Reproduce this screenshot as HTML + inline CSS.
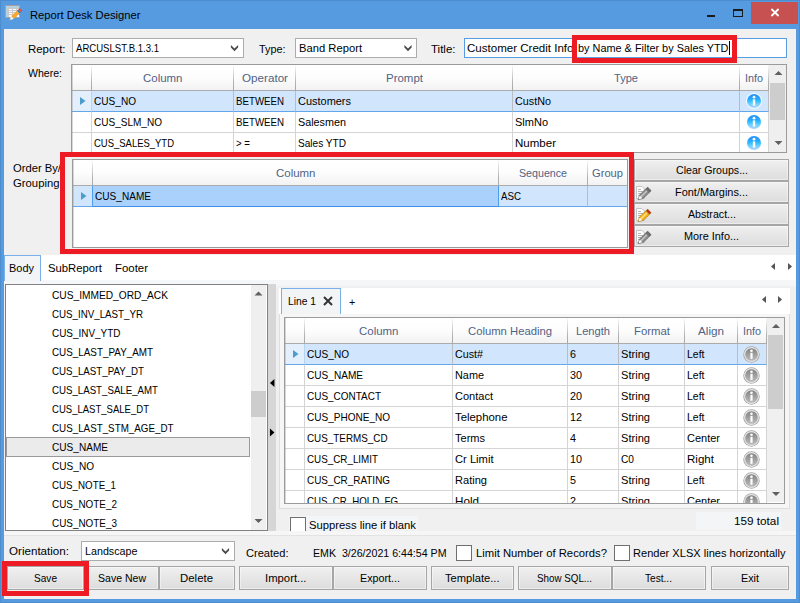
<!DOCTYPE html>
<html><head><meta charset="utf-8"><title>Report Desk Designer</title><style>
html,body{margin:0;padding:0;}
body{width:800px;height:603px;position:relative;overflow:hidden;background:#569be0;font-family:"Liberation Sans",sans-serif;font-size:12px;color:#000;}
div{position:absolute;box-sizing:border-box;}
.t{white-space:nowrap;line-height:14px;height:14px;font-size:11.5px;}
.s{display:inline-block;transform-origin:0 50%;white-space:pre;}
.hd{background:linear-gradient(#ffffff,#fdfdfd 50%,#f2f2f2);border-bottom:1px solid #ababab;color:#4f6384;white-space:nowrap;overflow:hidden;}
.c{border-right:1px solid #d4d4d4;border-bottom:1px solid #d4d4d4;background:#fff;white-space:nowrap;overflow:hidden;}
.sel{background:#d1e6fd;border-bottom:1px solid #63a7ea;border-right-color:#b9bcc0;}
.ind2{border-right-color:#4f9ded;}
.ind{background:#e3effc;border-right-color:#b5d3f3;}
.foc{background:#a9d1fb;border-bottom:1px solid #3e8fe6;border-right-color:#4f9ded;}
.btn{background:linear-gradient(#f0f0f0,#e6e6e6 50%,#dddddd);border:1px solid #a6a6a6;white-space:nowrap;box-shadow:inset 0 0 0 1px rgba(255,255,255,.45);}
.cb{background:#fff;border:1px solid #6f6f6f;}
.combo{background:#fff;border:1px solid #acacac;}
.red{border:5px solid #ed1c24;}
svg{position:absolute;overflow:visible;}
</style></head><body>
<div class="" style="left:0px;top:0px;width:800px;height:603px;border:1px solid #4d8ccd;border-bottom-color:#4d8ccd;"></div>
<div class="t" style="left:29.5px;top:8px;"><span class="s" style="transform:scaleX(0.9767);">Report Desk Designer</span></div>
<div class="" style="left:751px;top:2px;width:47px;height:22px;background:#c75050;"></div>
<svg style="left:0;top:0" width="1" height="1"><path d="M771.4,9 L778.6,16 M778.6,9 L771.4,16" stroke="#fff" stroke-width="1.8" fill="none"/></svg>
<div class="" style="left:707px;top:15px;width:8px;height:2px;background:#1a1a1a;"></div>
<div class="" style="left:733px;top:9px;width:10px;height:8px;border:1px solid #1a1a1a;border-top:2px solid #1a1a1a;"></div>
<svg style="left:0;top:0" width="30" height="28" viewBox="0 0 30 28">
<rect x="5.5" y="5.5" width="14" height="12" fill="#ffffff" stroke="#a2a2a2" stroke-width="1"/>
<rect x="6" y="6" width="13" height="2" fill="#a6d6ee"/>
<rect x="6" y="6" width="2" height="11" fill="#a6d6ee"/>
<path d="M6,8.5h13M6,10.5h13M6,12.5h13M6,14.5h13M8.5,6v11M12.5,6v11M16.5,6v11" stroke="#c9c9c9" stroke-width="1" fill="none"/>
<polygon points="9.40,20.40 11.21,16.06 13.83,18.82" fill="#f6f6f6"/>
<polygon points="9.40,20.40 10.03,18.89 10.94,19.85" fill="#8a8a8a"/>
<polygon points="11.21,16.06 16.95,10.63 19.56,13.38 13.83,18.82" fill="#f9a92e"/>
<polygon points="16.95,10.63 18.11,9.53 20.72,12.28 19.56,13.38" fill="#2f7fc2"/>
<polygon points="18.11,9.53 19.69,8.02 22.31,10.78 20.72,12.28" fill="#e2503c"/>
</svg>
<div class="" style="left:4px;top:29px;width:792px;height:570px;background:#f0f0f0;"></div>
<div class="t" style="left:28.0px;top:42px;"><span class="s" style="transform:scaleX(0.9942);">Report:</span></div>
<div class="combo" style="left:72px;top:38px;width:172px;height:20px;"></div>
<div class="t" style="left:76.0px;top:41px;"><span class="s" style="transform:scaleX(0.8323);">ARCUSLST.B.1.3.1</span></div>
<svg style="left:0;top:0" width="1" height="1"><polygon points="230.9,45 234.5,48.6 238.1,45 238.1,47.6 234.5,51.2 230.9,47.6" fill="#4a4a4a"/></svg>
<div class="t" style="left:259.0px;top:42px;"><span class="s" style="transform:scaleX(0.9417);">Type:</span></div>
<div class="combo" style="left:295px;top:38px;width:122px;height:20px;"></div>
<div class="t" style="left:299.0px;top:41px;"><span class="s" style="transform:scaleX(0.9756);">Band Report</span></div>
<svg style="left:0;top:0" width="1" height="1"><polygon points="404.4,45 408.0,48.6 411.6,45 411.6,47.6 408.0,51.2 404.4,47.6" fill="#4a4a4a"/></svg>
<div class="t" style="left:431.0px;top:42px;"><span class="s" style="transform:scaleX(1.0000);">Title:</span></div>
<div class="combo" style="left:464px;top:38px;width:323px;height:20px;border-color:#569de5;"></div>
<div class="t" style="left:467.4px;top:41px;"><span class="s" style="transform:scaleX(1.0037);">Customer Credit Info</span></div>
<div class="t" style="left:578.0px;top:41px;"><span class="s" style="transform:scaleX(0.9469);">by Name &amp; Filter by Sales YTD</span></div>
<div class="" style="left:729px;top:41px;width:1px;height:14px;background:#000;"></div>
<div class="t" style="left:28.0px;top:66px;"><span class="s" style="transform:scaleX(0.9170);">Where:</span></div>
<div style="left:71px;top:64px;width:716px;height:89px;background:#fff;border:1px solid #9b9b9b;overflow:hidden;">
</div>
<div class="hd" style="left:72px;top:65px;width:20px;height:26px;"></div>
<div class="" style="left:91px;top:65px;width:1px;height:25px;background:linear-gradient(#fbfbfb,#e0e0e0 25%,#b2b2b2 70%,#a8a8a8);"></div>
<div class="hd" style="left:92px;top:65px;width:142px;height:26px;"></div>
<div class="" style="left:233px;top:65px;width:1px;height:25px;background:linear-gradient(#fbfbfb,#e0e0e0 25%,#b2b2b2 70%,#a8a8a8);"></div>
<div class="t" style="left:142.8px;top:71px;color:#4f6384;"><span class="s" style="transform:scaleX(0.9965);">Column</span></div>
<div class="hd" style="left:234px;top:65px;width:62px;height:26px;"></div>
<div class="" style="left:295px;top:65px;width:1px;height:25px;background:linear-gradient(#fbfbfb,#e0e0e0 25%,#b2b2b2 70%,#a8a8a8);"></div>
<div class="t" style="left:241.5px;top:71px;color:#4f6384;"><span class="s" style="transform:scaleX(1.0134);">Operator</span></div>
<div class="hd" style="left:296px;top:65px;width:217px;height:26px;"></div>
<div class="" style="left:512px;top:65px;width:1px;height:25px;background:linear-gradient(#fbfbfb,#e0e0e0 25%,#b2b2b2 70%,#a8a8a8);"></div>
<div class="t" style="left:385.5px;top:71px;color:#4f6384;"><span class="s" style="transform:scaleX(0.9979);">Prompt</span></div>
<div class="hd" style="left:513px;top:65px;width:227px;height:26px;"></div>
<div class="" style="left:739px;top:65px;width:1px;height:25px;background:linear-gradient(#fbfbfb,#e0e0e0 25%,#b2b2b2 70%,#a8a8a8);"></div>
<div class="t" style="left:614.0px;top:71px;color:#4f6384;"><span class="s" style="transform:scaleX(0.9624);">Type</span></div>
<div class="hd" style="left:740px;top:65px;width:29px;height:26px;"></div>
<div class="" style="left:768px;top:65px;width:1px;height:25px;background:linear-gradient(#fbfbfb,#e0e0e0 25%,#b2b2b2 70%,#a8a8a8);"></div>
<div class="t" style="left:745.0px;top:71px;color:#4f6384;"><span class="s" style="transform:scaleX(0.9381);">Info</span></div>
<div class="c sel ind" style="left:72px;top:91px;width:20px;height:21px;"></div>
<div class="c sel" style="left:92px;top:91px;width:142px;height:21px;"></div>
<div class="c sel" style="left:234px;top:91px;width:62px;height:21px;"></div>
<div class="c sel" style="left:296px;top:91px;width:217px;height:21px;"></div>
<div class="c sel" style="left:513px;top:91px;width:227px;height:21px;"></div>
<div class="c sel" style="left:740px;top:91px;width:29px;height:21px;"></div>
<div style="left:72px;top:91px;width:714px;height:21px;overflow:hidden;">
<svg style="left:8px;top:6px" width="6" height="8"><polygon points="0,0 0,8 5.5,4" fill="#4c9ccc"/></svg>
<div class="t" style="left:22px;top:3px;"><span class="s" style="transform:scaleX(0.8761);">CUS_NO</span></div>
<div class="t" style="left:164px;top:3px;"><span class="s" style="transform:scaleX(0.8440);">BETWEEN</span></div>
<div class="t" style="left:226px;top:3px;"><span class="s" style="transform:scaleX(0.9531);">Customers</span></div>
<div class="t" style="left:443px;top:3px;"><span class="s" style="transform:scaleX(0.9385);">CustNo</span></div>
<div style="left:668px;top:0;width:1px;height:1px;"><svg style="left:6px;top:2px" width="16" height="16" viewBox="0 0 16 16"><defs><linearGradient id="gb" x1="0" y1="0" x2="0" y2="1"><stop offset="0" stop-color="#2392ff"/><stop offset="0.35" stop-color="#2aa6ff"/><stop offset="0.5" stop-color="#30c2ff"/><stop offset="0.72" stop-color="#74d0ff"/><stop offset="1" stop-color="#b0d4ff"/></linearGradient></defs><circle cx="8" cy="8" r="8" fill="#fff" fill-opacity="0.85"/><circle cx="8" cy="8" r="7" fill="url(#gb)"/><circle cx="8" cy="4.2" r="1.4" fill="#fff"/><rect x="6.8" y="6.4" width="2.4" height="6.2" fill="#fff"/></svg></div>
</div>
<div class="c" style="left:72px;top:112px;width:20px;height:21px;"></div>
<div class="c" style="left:92px;top:112px;width:142px;height:21px;"></div>
<div class="c" style="left:234px;top:112px;width:62px;height:21px;"></div>
<div class="c" style="left:296px;top:112px;width:217px;height:21px;"></div>
<div class="c" style="left:513px;top:112px;width:227px;height:21px;"></div>
<div class="c" style="left:740px;top:112px;width:29px;height:21px;"></div>
<div style="left:72px;top:112px;width:714px;height:21px;overflow:hidden;">
<div class="t" style="left:22px;top:3px;"><span class="s" style="transform:scaleX(0.8721);">CUS_SLM_NO</span></div>
<div class="t" style="left:164px;top:3px;"><span class="s" style="transform:scaleX(0.8440);">BETWEEN</span></div>
<div class="t" style="left:226px;top:3px;"><span class="s" style="transform:scaleX(0.9386);">Salesmen</span></div>
<div class="t" style="left:443px;top:3px;"><span class="s" style="transform:scaleX(0.9561);">SlmNo</span></div>
<div style="left:668px;top:0;width:1px;height:1px;"><svg style="left:6px;top:2px" width="16" height="16" viewBox="0 0 16 16"><defs><linearGradient id="gb" x1="0" y1="0" x2="0" y2="1"><stop offset="0" stop-color="#2392ff"/><stop offset="0.35" stop-color="#2aa6ff"/><stop offset="0.5" stop-color="#30c2ff"/><stop offset="0.72" stop-color="#74d0ff"/><stop offset="1" stop-color="#b0d4ff"/></linearGradient></defs><circle cx="8" cy="8" r="8" fill="#fff" fill-opacity="0.85"/><circle cx="8" cy="8" r="7" fill="url(#gb)"/><circle cx="8" cy="4.2" r="1.4" fill="#fff"/><rect x="6.8" y="6.4" width="2.4" height="6.2" fill="#fff"/></svg></div>
</div>
<div class="c" style="left:72px;top:133px;width:20px;height:19px;border-bottom:none;"></div>
<div class="c" style="left:92px;top:133px;width:142px;height:19px;border-bottom:none;"></div>
<div class="c" style="left:234px;top:133px;width:62px;height:19px;border-bottom:none;"></div>
<div class="c" style="left:296px;top:133px;width:217px;height:19px;border-bottom:none;"></div>
<div class="c" style="left:513px;top:133px;width:227px;height:19px;border-bottom:none;"></div>
<div class="c" style="left:740px;top:133px;width:29px;height:19px;border-bottom:none;"></div>
<div style="left:72px;top:133px;width:714px;height:19px;overflow:hidden;">
<div class="t" style="left:22px;top:3px;"><span class="s" style="transform:scaleX(0.8234);">CUS_SALES_YTD</span></div>
<div class="t" style="left:164px;top:3px;"><span class="s" style="transform:scaleX(0.8413);">&gt; =</span></div>
<div class="t" style="left:226px;top:3px;"><span class="s" style="transform:scaleX(0.8765);">Sales YTD</span></div>
<div class="t" style="left:443px;top:3px;"><span class="s" style="transform:scaleX(1.0023);">Number</span></div>
<div style="left:668px;top:0;width:1px;height:1px;"><svg style="left:6px;top:2px" width="16" height="16" viewBox="0 0 16 16"><defs><linearGradient id="gb" x1="0" y1="0" x2="0" y2="1"><stop offset="0" stop-color="#2392ff"/><stop offset="0.35" stop-color="#2aa6ff"/><stop offset="0.5" stop-color="#30c2ff"/><stop offset="0.72" stop-color="#74d0ff"/><stop offset="1" stop-color="#b0d4ff"/></linearGradient></defs><circle cx="8" cy="8" r="8" fill="#fff" fill-opacity="0.85"/><circle cx="8" cy="8" r="7" fill="url(#gb)"/><circle cx="8" cy="4.2" r="1.4" fill="#fff"/><rect x="6.8" y="6.4" width="2.4" height="6.2" fill="#fff"/></svg></div>
</div>
<div class="" style="left:769px;top:65px;width:17px;height:87px;background:#efefef;"></div>
<div class="" style="left:770px;top:83px;width:15px;height:37px;background:#cdcdcd;"></div>
<svg style="left:0;top:0" width="1" height="1"><polygon points="774.5,75.0 782.5,75.0 778.5,71.0" fill="#606060"/></svg>
<svg style="left:0;top:0" width="1" height="1"><polygon points="774.5,141.0 782.5,141.0 778.5,145.0" fill="#606060"/></svg>
<div class="t" style="left:13.0px;top:161px;"><span class="s" style="transform:scaleX(0.9752);">Order By/</span></div>
<div class="t" style="left:13.0px;top:176px;"><span class="s" style="transform:scaleX(0.9828);">Grouping</span></div>
<div style="left:72px;top:159px;width:556px;height:89px;background:#fff;border:1px solid #9b9b9b;overflow:hidden;">
</div>
<div class="hd" style="left:73px;top:160px;width:20px;height:26px;"></div>
<div class="" style="left:92px;top:160px;width:1px;height:25px;background:linear-gradient(#fbfbfb,#e0e0e0 25%,#b2b2b2 70%,#a8a8a8);"></div>
<div class="hd" style="left:93px;top:160px;width:406px;height:26px;"></div>
<div class="" style="left:498px;top:160px;width:1px;height:25px;background:linear-gradient(#fbfbfb,#e0e0e0 25%,#b2b2b2 70%,#a8a8a8);"></div>
<div class="t" style="left:275.8px;top:166px;color:#4f6384;"><span class="s" style="transform:scaleX(0.9965);">Column</span></div>
<div class="hd" style="left:499px;top:160px;width:89px;height:26px;"></div>
<div class="" style="left:587px;top:160px;width:1px;height:25px;background:linear-gradient(#fbfbfb,#e0e0e0 25%,#b2b2b2 70%,#a8a8a8);"></div>
<div class="t" style="left:519.0px;top:166px;color:#4f6384;"><span class="s" style="transform:scaleX(0.9267);">Sequence</span></div>
<div class="hd" style="left:588px;top:160px;width:39px;height:26px;"></div>
<div class="t" style="left:591.5px;top:166px;color:#4f6384;"><span class="s" style="transform:scaleX(0.9697);">Group</span></div>
<div class="c sel ind2" style="left:73px;top:186px;width:20px;height:21px;"></div>
<div class="c sel foc" style="left:93px;top:186px;width:406px;height:21px;"></div>
<div class="c sel" style="left:499px;top:186px;width:89px;height:21px;"></div>
<div class="c sel" style="left:588px;top:186px;width:39px;height:21px;border-right:none;"></div>
<div style="left:73px;top:186px;width:554px;height:21px;overflow:hidden;">
<svg style="left:8px;top:6px" width="6" height="8"><polygon points="0,0 0,8 5.5,4" fill="#4c9ccc"/></svg>
<div class="t" style="left:22px;top:3px;"><span class="s" style="transform:scaleX(0.8763);">CUS_NAME</span></div>
<div class="t" style="left:428px;top:3px;"><span class="s" style="transform:scaleX(0.8454);">ASC</span></div>
</div>
<div class="btn" style="left:634px;top:159px;width:155px;height:22px;"></div>
<div class="t" style="left:675.5px;top:163px;"><span class="s" style="transform:scaleX(0.9233);">Clear Groups...</span></div>
<div class="btn" style="left:634px;top:181px;width:155px;height:22px;"></div>
<div class="t" style="left:675.0px;top:185px;"><span class="s" style="transform:scaleX(0.9517);">Font/Margins...</span></div>
<svg style="left:0;top:0" width="1" height="1"><path d="M636.5,186.5 h5.5 l2.5,2.5 v9.5 h-8 z" fill="#fdfdfd" stroke="#c4c4c4" stroke-width="1"/><path d="M638,189.5h3 M638,191.5h5 M638,193.5h5 M638,195.5h4" stroke="#b4b4b4" stroke-width="1" fill="none"/><polygon points="637.78,200.01 639.12,194.88 647.67,186.77 651.53,190.83 642.97,198.94" fill="#6a6a6a"/><polygon points="638.58,199.25 639.82,195.32 642.57,198.22" fill="#ffffff"/><polygon points="639.61,195.10 645.70,189.33 648.86,192.67 642.78,198.44" fill="#8c8c8c"/><polygon points="640.50,196.05 646.59,190.28 647.62,191.36 641.54,197.14" fill="#c4c4c4"/><polygon points="645.70,189.33 646.28,188.78 649.44,192.12 648.86,192.67" fill="#7a7a7a"/><polygon points="646.28,188.78 647.65,187.48 650.82,190.81 649.44,192.12" fill="#6e6e6e"/></svg>
<div class="btn" style="left:634px;top:203px;width:155px;height:22px;"></div>
<div class="t" style="left:687.5px;top:207px;"><span class="s" style="transform:scaleX(0.9270);">Abstract...</span></div>
<svg style="left:0;top:0" width="1" height="1"><path d="M636.5,208.5 h5.5 l2.5,2.5 v9.5 h-8 z" fill="#fdfdfd" stroke="#c4c4c4" stroke-width="1"/><path d="M638,211.5h3 M638,213.5h5 M638,215.5h5 M638,217.5h4" stroke="#b4b4b4" stroke-width="1" fill="none"/><polygon points="637.78,222.01 639.12,216.88 647.67,208.77 651.53,212.83 642.97,220.94" fill="#b07a10"/><polygon points="638.58,221.25 639.82,217.32 642.57,220.22" fill="#ffffff"/><polygon points="639.61,217.10 645.70,211.33 648.86,214.67 642.78,220.44" fill="#f4b21e"/><polygon points="640.50,218.05 646.59,212.28 647.62,213.36 641.54,219.14" fill="#ffe27a"/><polygon points="645.70,211.33 646.28,210.78 649.44,214.12 648.86,214.67" fill="#d9a020"/><polygon points="646.28,210.78 647.65,209.48 650.82,212.81 649.44,214.12" fill="#c8202a"/></svg>
<div class="btn" style="left:634px;top:225px;width:155px;height:22px;"></div>
<div class="t" style="left:684.0px;top:229px;"><span class="s" style="transform:scaleX(0.9455);">More Info...</span></div>
<svg style="left:0;top:0" width="1" height="1"><path d="M636.5,230.5 h5.5 l2.5,2.5 v9.5 h-8 z" fill="#fdfdfd" stroke="#c4c4c4" stroke-width="1"/><path d="M638,233.5h3 M638,235.5h5 M638,237.5h5 M638,239.5h4" stroke="#b4b4b4" stroke-width="1" fill="none"/><polygon points="637.78,244.01 639.12,238.88 647.67,230.77 651.53,234.83 642.97,242.94" fill="#6a6a6a"/><polygon points="638.58,243.25 639.82,239.32 642.57,242.22" fill="#ffffff"/><polygon points="639.61,239.10 645.70,233.33 648.86,236.67 642.78,242.44" fill="#8c8c8c"/><polygon points="640.50,240.05 646.59,234.28 647.62,235.36 641.54,241.14" fill="#c4c4c4"/><polygon points="645.70,233.33 646.28,232.78 649.44,236.12 648.86,236.67" fill="#7a7a7a"/><polygon points="646.28,232.78 647.65,231.48 650.82,234.81 649.44,236.12" fill="#6e6e6e"/></svg>
<div class="" style="left:4px;top:255px;width:792px;height:25px;background:#fff;"></div>
<div class="" style="left:4px;top:280px;width:792px;height:6px;background:#f5f6f7;"></div>
<div class="" style="left:4px;top:255px;width:37px;height:26px;background:#f3f4f6;border:1px solid #7ab0ea;border-bottom:none;"></div>
<div class="t" style="left:9.0px;top:261px;"><span class="s" style="transform:scaleX(0.9535);">Body</span></div>
<div class="t" style="left:48.0px;top:261px;"><span class="s" style="transform:scaleX(0.9821);">SubReport</span></div>
<div class="t" style="left:115.0px;top:261px;"><span class="s" style="transform:scaleX(0.9925);">Footer</span></div>
<svg style="left:0;top:0" width="1" height="1"><polygon points="775.0,263.0 775.0,270.0 771.0,266.5" fill="#555"/></svg>
<svg style="left:0;top:0" width="1" height="1"><polygon points="788.0,263.0 788.0,270.0 792.0,266.5" fill="#555"/></svg>
<div class="" style="left:5px;top:284px;width:263px;height:247px;background:#fff;border:1px solid #7f8185;"></div>
<div class="t" style="left:52.0px;top:288px;"><span class="s" style="transform:scaleX(0.8855);">CUS_IMMED_ORD_ACK</span></div>
<div class="t" style="left:52.0px;top:307px;"><span class="s" style="transform:scaleX(0.8475);">CUS_INV_LAST_YR</span></div>
<div class="t" style="left:52.0px;top:326px;"><span class="s" style="transform:scaleX(0.8644);">CUS_INV_YTD</span></div>
<div class="t" style="left:52.0px;top:345px;"><span class="s" style="transform:scaleX(0.8573);">CUS_LAST_PAY_AMT</span></div>
<div class="t" style="left:52.0px;top:364px;"><span class="s" style="transform:scaleX(0.8450);">CUS_LAST_PAY_DT</span></div>
<div class="t" style="left:52.0px;top:383px;"><span class="s" style="transform:scaleX(0.8418);">CUS_LAST_SALE_AMT</span></div>
<div class="t" style="left:52.0px;top:402px;"><span class="s" style="transform:scaleX(0.8293);">CUS_LAST_SALE_DT</span></div>
<div class="t" style="left:52.0px;top:421px;"><span class="s" style="transform:scaleX(0.8525);">CUS_LAST_STM_AGE_DT</span></div>
<div class="" style="left:6px;top:437px;width:244px;height:20px;background:#ebebeb;border:1px solid #9a9a9a;"></div>
<div class="t" style="left:52.0px;top:440px;"><span class="s" style="transform:scaleX(0.8763);">CUS_NAME</span></div>
<div class="t" style="left:52.0px;top:459px;"><span class="s" style="transform:scaleX(0.8761);">CUS_NO</span></div>
<div class="t" style="left:52.0px;top:478px;"><span class="s" style="transform:scaleX(0.8486);">CUS_NOTE_1</span></div>
<div class="t" style="left:52.0px;top:497px;"><span class="s" style="transform:scaleX(0.8618);">CUS_NOTE_2</span></div>
<div class="t" style="left:52.0px;top:516px;"><span class="s" style="transform:scaleX(0.8618);">CUS_NOTE_3</span></div>
<div class="" style="left:251px;top:285px;width:15px;height:245px;background:#efefef;"></div>
<div class="" style="left:251px;top:391px;width:15px;height:26px;background:#cdcdcd;"></div>
<svg style="left:0;top:0" width="1" height="1"><polygon points="254.5,295.5 262.5,295.5 258.5,291.5" fill="#606060"/></svg>
<svg style="left:0;top:0" width="1" height="1"><polygon points="254.5,519.0 262.5,519.0 258.5,523.0" fill="#606060"/></svg>
<div class="" style="left:268px;top:284px;width:8px;height:247px;background:#d6d6d6;"></div>
<svg style="left:0;top:0" width="1" height="1"><polygon points="274.45,379 274.45,387 269.95,383" fill="#000"/></svg>
<svg style="left:0;top:0" width="1" height="1"><polygon points="269.95,428.5 269.95,436.5 274.45,432.5" fill="#000"/></svg>
<div class="" style="left:279px;top:288px;width:511px;height:221px;background:#fff;"></div>
<div class="" style="left:279px;top:314px;width:511px;height:195px;background:#f6f6f6;border:1px solid #dedede;border-top:none;"></div>
<div class="" style="left:281px;top:288px;width:60px;height:26px;background:#f3f4f6;border:1px solid #7ab0ea;border-bottom:none;"></div>
<div class="t" style="left:288.0px;top:294px;"><span class="s" style="transform:scaleX(0.8933);">Line 1</span></div>
<svg style="left:0;top:0" width="1" height="1"><path d="M324,297 L332,305 M332,297 L324,305" stroke="#333" stroke-width="2" fill="none"/></svg>
<div class="t" style="left:349.0px;top:294.5px;"><span class="s" style="transform:scaleX(0.9300);">+</span></div>
<svg style="left:0;top:0" width="1" height="1"><polygon points="766.0,296.0 766.0,303.0 762.0,299.5" fill="#555"/></svg>
<svg style="left:0;top:0" width="1" height="1"><polygon points="778.0,296.0 778.0,303.0 782.0,299.5" fill="#555"/></svg>
<div style="left:284px;top:317px;width:501px;height:187px;background:#fff;border:1px solid #9b9b9b;overflow:hidden;">
</div>
<div class="hd" style="left:285px;top:318px;width:20px;height:26px;"></div>
<div class="" style="left:304px;top:318px;width:1px;height:25px;background:linear-gradient(#fbfbfb,#e0e0e0 25%,#b2b2b2 70%,#a8a8a8);"></div>
<div class="hd" style="left:305px;top:318px;width:148px;height:26px;"></div>
<div class="" style="left:452px;top:318px;width:1px;height:25px;background:linear-gradient(#fbfbfb,#e0e0e0 25%,#b2b2b2 70%,#a8a8a8);"></div>
<div class="t" style="left:358.8px;top:324px;color:#4f6384;"><span class="s" style="transform:scaleX(0.9965);">Column</span></div>
<div class="hd" style="left:453px;top:318px;width:115px;height:26px;"></div>
<div class="" style="left:567px;top:318px;width:1px;height:25px;background:linear-gradient(#fbfbfb,#e0e0e0 25%,#b2b2b2 70%,#a8a8a8);"></div>
<div class="t" style="left:468.0px;top:324px;color:#4f6384;"><span class="s" style="transform:scaleX(0.9805);">Column Heading</span></div>
<div class="hd" style="left:568px;top:318px;width:51px;height:26px;"></div>
<div class="" style="left:618px;top:318px;width:1px;height:25px;background:linear-gradient(#fbfbfb,#e0e0e0 25%,#b2b2b2 70%,#a8a8a8);"></div>
<div class="t" style="left:576.0px;top:324px;color:#4f6384;"><span class="s" style="transform:scaleX(0.9663);">Length</span></div>
<div class="hd" style="left:619px;top:318px;width:66px;height:26px;"></div>
<div class="" style="left:684px;top:318px;width:1px;height:25px;background:linear-gradient(#fbfbfb,#e0e0e0 25%,#b2b2b2 70%,#a8a8a8);"></div>
<div class="t" style="left:633.5px;top:324px;color:#4f6384;"><span class="s" style="transform:scaleX(0.9884);">Format</span></div>
<div class="hd" style="left:685px;top:318px;width:53px;height:26px;"></div>
<div class="" style="left:737px;top:318px;width:1px;height:25px;background:linear-gradient(#fbfbfb,#e0e0e0 25%,#b2b2b2 70%,#a8a8a8);"></div>
<div class="t" style="left:698.0px;top:324px;color:#4f6384;"><span class="s" style="transform:scaleX(1.0165);">Align</span></div>
<div class="hd" style="left:738px;top:318px;width:29px;height:26px;"></div>
<div class="" style="left:766px;top:318px;width:1px;height:25px;background:linear-gradient(#fbfbfb,#e0e0e0 25%,#b2b2b2 70%,#a8a8a8);"></div>
<div class="t" style="left:743.0px;top:324px;color:#4f6384;"><span class="s" style="transform:scaleX(0.9381);">Info</span></div>
<div class="c sel ind" style="left:285px;top:344px;width:20px;height:21px;"></div>
<div class="c sel" style="left:305px;top:344px;width:148px;height:21px;"></div>
<div class="c sel" style="left:453px;top:344px;width:115px;height:21px;"></div>
<div class="c sel" style="left:568px;top:344px;width:51px;height:21px;"></div>
<div class="c sel" style="left:619px;top:344px;width:66px;height:21px;"></div>
<div class="c sel" style="left:685px;top:344px;width:53px;height:21px;"></div>
<div class="c sel" style="left:738px;top:344px;width:29px;height:21px;"></div>
<div style="left:285px;top:344px;width:499px;height:21px;overflow:hidden;">
<svg style="left:8px;top:6px" width="6" height="8"><polygon points="0,0 0,8 5.5,4" fill="#4c9ccc"/></svg>
<div class="t" style="left:22px;top:3px;"><span class="s" style="transform:scaleX(0.8761);">CUS_NO</span></div>
<div class="t" style="left:170px;top:3px;"><span class="s" style="transform:scaleX(0.9319);">Cust#</span></div>
<div class="t" style="left:285px;top:3px;"><span class="s" style="transform:scaleX(0.9366);">6</span></div>
<div class="t" style="left:336px;top:3px;"><span class="s" style="transform:scaleX(0.9652);">String</span></div>
<div class="t" style="left:402px;top:3px;"><span class="s" style="transform:scaleX(0.9121);">Left</span></div>
<div style="left:453px;top:0;width:1px;height:1px;"><svg style="left:5px;top:2px" width="17" height="17" viewBox="0 0 17 17"><defs><linearGradient id="gg" x1="0" y1="0" x2="0" y2="1"><stop offset="0" stop-color="#838383"/><stop offset="1" stop-color="#bcbcbc"/></linearGradient></defs><circle cx="8.5" cy="8.5" r="8.2" fill="#a6a6a6"/><circle cx="8.5" cy="8.5" r="7.4" fill="#e6e6e6"/><circle cx="8.5" cy="8.5" r="6.3" fill="url(#gg)"/><circle cx="8.5" cy="4.8" r="1.3" fill="#fff"/><rect x="7.4" y="6.8" width="2.2" height="6" fill="#fff"/></svg></div>
</div>
<div class="c" style="left:285px;top:365px;width:20px;height:21px;"></div>
<div class="c" style="left:305px;top:365px;width:148px;height:21px;"></div>
<div class="c" style="left:453px;top:365px;width:115px;height:21px;"></div>
<div class="c" style="left:568px;top:365px;width:51px;height:21px;"></div>
<div class="c" style="left:619px;top:365px;width:66px;height:21px;"></div>
<div class="c" style="left:685px;top:365px;width:53px;height:21px;"></div>
<div class="c" style="left:738px;top:365px;width:29px;height:21px;"></div>
<div style="left:285px;top:365px;width:499px;height:21px;overflow:hidden;">
<div class="t" style="left:22px;top:3px;"><span class="s" style="transform:scaleX(0.8763);">CUS_NAME</span></div>
<div class="t" style="left:170px;top:3px;"><span class="s" style="transform:scaleX(0.9450);">Name</span></div>
<div class="t" style="left:285px;top:3px;"><span class="s" style="transform:scaleX(0.9377);">30</span></div>
<div class="t" style="left:336px;top:3px;"><span class="s" style="transform:scaleX(0.9652);">String</span></div>
<div class="t" style="left:402px;top:3px;"><span class="s" style="transform:scaleX(0.9121);">Left</span></div>
<div style="left:453px;top:0;width:1px;height:1px;"><svg style="left:5px;top:2px" width="17" height="17" viewBox="0 0 17 17"><defs><linearGradient id="gg" x1="0" y1="0" x2="0" y2="1"><stop offset="0" stop-color="#838383"/><stop offset="1" stop-color="#bcbcbc"/></linearGradient></defs><circle cx="8.5" cy="8.5" r="8.2" fill="#a6a6a6"/><circle cx="8.5" cy="8.5" r="7.4" fill="#e6e6e6"/><circle cx="8.5" cy="8.5" r="6.3" fill="url(#gg)"/><circle cx="8.5" cy="4.8" r="1.3" fill="#fff"/><rect x="7.4" y="6.8" width="2.2" height="6" fill="#fff"/></svg></div>
</div>
<div class="c" style="left:285px;top:386px;width:20px;height:21px;"></div>
<div class="c" style="left:305px;top:386px;width:148px;height:21px;"></div>
<div class="c" style="left:453px;top:386px;width:115px;height:21px;"></div>
<div class="c" style="left:568px;top:386px;width:51px;height:21px;"></div>
<div class="c" style="left:619px;top:386px;width:66px;height:21px;"></div>
<div class="c" style="left:685px;top:386px;width:53px;height:21px;"></div>
<div class="c" style="left:738px;top:386px;width:29px;height:21px;"></div>
<div style="left:285px;top:386px;width:499px;height:21px;overflow:hidden;">
<div class="t" style="left:22px;top:3px;"><span class="s" style="transform:scaleX(0.8664);">CUS_CONTACT</span></div>
<div class="t" style="left:170px;top:3px;"><span class="s" style="transform:scaleX(0.9586);">Contact</span></div>
<div class="t" style="left:285px;top:3px;"><span class="s" style="transform:scaleX(0.9377);">20</span></div>
<div class="t" style="left:336px;top:3px;"><span class="s" style="transform:scaleX(0.9652);">String</span></div>
<div class="t" style="left:402px;top:3px;"><span class="s" style="transform:scaleX(0.9121);">Left</span></div>
<div style="left:453px;top:0;width:1px;height:1px;"><svg style="left:5px;top:2px" width="17" height="17" viewBox="0 0 17 17"><defs><linearGradient id="gg" x1="0" y1="0" x2="0" y2="1"><stop offset="0" stop-color="#838383"/><stop offset="1" stop-color="#bcbcbc"/></linearGradient></defs><circle cx="8.5" cy="8.5" r="8.2" fill="#a6a6a6"/><circle cx="8.5" cy="8.5" r="7.4" fill="#e6e6e6"/><circle cx="8.5" cy="8.5" r="6.3" fill="url(#gg)"/><circle cx="8.5" cy="4.8" r="1.3" fill="#fff"/><rect x="7.4" y="6.8" width="2.2" height="6" fill="#fff"/></svg></div>
</div>
<div class="c" style="left:285px;top:407px;width:20px;height:21px;"></div>
<div class="c" style="left:305px;top:407px;width:148px;height:21px;"></div>
<div class="c" style="left:453px;top:407px;width:115px;height:21px;"></div>
<div class="c" style="left:568px;top:407px;width:51px;height:21px;"></div>
<div class="c" style="left:619px;top:407px;width:66px;height:21px;"></div>
<div class="c" style="left:685px;top:407px;width:53px;height:21px;"></div>
<div class="c" style="left:738px;top:407px;width:29px;height:21px;"></div>
<div style="left:285px;top:407px;width:499px;height:21px;overflow:hidden;">
<div class="t" style="left:22px;top:3px;"><span class="s" style="transform:scaleX(0.8717);">CUS_PHONE_NO</span></div>
<div class="t" style="left:170px;top:3px;"><span class="s" style="transform:scaleX(0.9891);">Telephone</span></div>
<div class="t" style="left:285px;top:3px;"><span class="s" style="transform:scaleX(0.9377);">12</span></div>
<div class="t" style="left:336px;top:3px;"><span class="s" style="transform:scaleX(0.9652);">String</span></div>
<div class="t" style="left:402px;top:3px;"><span class="s" style="transform:scaleX(0.9121);">Left</span></div>
<div style="left:453px;top:0;width:1px;height:1px;"><svg style="left:5px;top:2px" width="17" height="17" viewBox="0 0 17 17"><defs><linearGradient id="gg" x1="0" y1="0" x2="0" y2="1"><stop offset="0" stop-color="#838383"/><stop offset="1" stop-color="#bcbcbc"/></linearGradient></defs><circle cx="8.5" cy="8.5" r="8.2" fill="#a6a6a6"/><circle cx="8.5" cy="8.5" r="7.4" fill="#e6e6e6"/><circle cx="8.5" cy="8.5" r="6.3" fill="url(#gg)"/><circle cx="8.5" cy="4.8" r="1.3" fill="#fff"/><rect x="7.4" y="6.8" width="2.2" height="6" fill="#fff"/></svg></div>
</div>
<div class="c" style="left:285px;top:428px;width:20px;height:21px;"></div>
<div class="c" style="left:305px;top:428px;width:148px;height:21px;"></div>
<div class="c" style="left:453px;top:428px;width:115px;height:21px;"></div>
<div class="c" style="left:568px;top:428px;width:51px;height:21px;"></div>
<div class="c" style="left:619px;top:428px;width:66px;height:21px;"></div>
<div class="c" style="left:685px;top:428px;width:53px;height:21px;"></div>
<div class="c" style="left:738px;top:428px;width:29px;height:21px;"></div>
<div style="left:285px;top:428px;width:499px;height:21px;overflow:hidden;">
<div class="t" style="left:22px;top:3px;"><span class="s" style="transform:scaleX(0.8570);">CUS_TERMS_CD</span></div>
<div class="t" style="left:170px;top:3px;"><span class="s" style="transform:scaleX(0.9581);">Terms</span></div>
<div class="t" style="left:285px;top:3px;"><span class="s" style="transform:scaleX(0.9366);">4</span></div>
<div class="t" style="left:336px;top:3px;"><span class="s" style="transform:scaleX(0.9652);">String</span></div>
<div class="t" style="left:402px;top:3px;"><span class="s" style="transform:scaleX(0.9557);">Center</span></div>
<div style="left:453px;top:0;width:1px;height:1px;"><svg style="left:5px;top:2px" width="17" height="17" viewBox="0 0 17 17"><defs><linearGradient id="gg" x1="0" y1="0" x2="0" y2="1"><stop offset="0" stop-color="#838383"/><stop offset="1" stop-color="#bcbcbc"/></linearGradient></defs><circle cx="8.5" cy="8.5" r="8.2" fill="#a6a6a6"/><circle cx="8.5" cy="8.5" r="7.4" fill="#e6e6e6"/><circle cx="8.5" cy="8.5" r="6.3" fill="url(#gg)"/><circle cx="8.5" cy="4.8" r="1.3" fill="#fff"/><rect x="7.4" y="6.8" width="2.2" height="6" fill="#fff"/></svg></div>
</div>
<div class="c" style="left:285px;top:449px;width:20px;height:21px;"></div>
<div class="c" style="left:305px;top:449px;width:148px;height:21px;"></div>
<div class="c" style="left:453px;top:449px;width:115px;height:21px;"></div>
<div class="c" style="left:568px;top:449px;width:51px;height:21px;"></div>
<div class="c" style="left:619px;top:449px;width:66px;height:21px;"></div>
<div class="c" style="left:685px;top:449px;width:53px;height:21px;"></div>
<div class="c" style="left:738px;top:449px;width:29px;height:21px;"></div>
<div style="left:285px;top:449px;width:499px;height:21px;overflow:hidden;">
<div class="t" style="left:22px;top:3px;"><span class="s" style="transform:scaleX(0.8546);">CUS_CR_LIMIT</span></div>
<div class="t" style="left:170px;top:3px;"><span class="s" style="transform:scaleX(0.9716);">Cr Limit</span></div>
<div class="t" style="left:285px;top:3px;"><span class="s" style="transform:scaleX(0.9377);">10</span></div>
<div class="t" style="left:336px;top:3px;"><span class="s" style="transform:scaleX(0.8842);">C0</span></div>
<div class="t" style="left:402px;top:3px;"><span class="s" style="transform:scaleX(1.0052);">Right</span></div>
<div style="left:453px;top:0;width:1px;height:1px;"><svg style="left:5px;top:2px" width="17" height="17" viewBox="0 0 17 17"><defs><linearGradient id="gg" x1="0" y1="0" x2="0" y2="1"><stop offset="0" stop-color="#838383"/><stop offset="1" stop-color="#bcbcbc"/></linearGradient></defs><circle cx="8.5" cy="8.5" r="8.2" fill="#a6a6a6"/><circle cx="8.5" cy="8.5" r="7.4" fill="#e6e6e6"/><circle cx="8.5" cy="8.5" r="6.3" fill="url(#gg)"/><circle cx="8.5" cy="4.8" r="1.3" fill="#fff"/><rect x="7.4" y="6.8" width="2.2" height="6" fill="#fff"/></svg></div>
</div>
<div class="c" style="left:285px;top:470px;width:20px;height:21px;"></div>
<div class="c" style="left:305px;top:470px;width:148px;height:21px;"></div>
<div class="c" style="left:453px;top:470px;width:115px;height:21px;"></div>
<div class="c" style="left:568px;top:470px;width:51px;height:21px;"></div>
<div class="c" style="left:619px;top:470px;width:66px;height:21px;"></div>
<div class="c" style="left:685px;top:470px;width:53px;height:21px;"></div>
<div class="c" style="left:738px;top:470px;width:29px;height:21px;"></div>
<div style="left:285px;top:470px;width:499px;height:21px;overflow:hidden;">
<div class="t" style="left:22px;top:3px;"><span class="s" style="transform:scaleX(0.8621);">CUS_CR_RATING</span></div>
<div class="t" style="left:170px;top:3px;"><span class="s" style="transform:scaleX(0.9624);">Rating</span></div>
<div class="t" style="left:285px;top:3px;"><span class="s" style="transform:scaleX(0.9366);">5</span></div>
<div class="t" style="left:336px;top:3px;"><span class="s" style="transform:scaleX(0.9652);">String</span></div>
<div class="t" style="left:402px;top:3px;"><span class="s" style="transform:scaleX(0.9121);">Left</span></div>
<div style="left:453px;top:0;width:1px;height:1px;"><svg style="left:5px;top:2px" width="17" height="17" viewBox="0 0 17 17"><defs><linearGradient id="gg" x1="0" y1="0" x2="0" y2="1"><stop offset="0" stop-color="#838383"/><stop offset="1" stop-color="#bcbcbc"/></linearGradient></defs><circle cx="8.5" cy="8.5" r="8.2" fill="#a6a6a6"/><circle cx="8.5" cy="8.5" r="7.4" fill="#e6e6e6"/><circle cx="8.5" cy="8.5" r="6.3" fill="url(#gg)"/><circle cx="8.5" cy="4.8" r="1.3" fill="#fff"/><rect x="7.4" y="6.8" width="2.2" height="6" fill="#fff"/></svg></div>
</div>
<div class="c" style="left:285px;top:491px;width:20px;height:12px;border-bottom:none;"></div>
<div class="c" style="left:305px;top:491px;width:148px;height:12px;border-bottom:none;"></div>
<div class="c" style="left:453px;top:491px;width:115px;height:12px;border-bottom:none;"></div>
<div class="c" style="left:568px;top:491px;width:51px;height:12px;border-bottom:none;"></div>
<div class="c" style="left:619px;top:491px;width:66px;height:12px;border-bottom:none;"></div>
<div class="c" style="left:685px;top:491px;width:53px;height:12px;border-bottom:none;"></div>
<div class="c" style="left:738px;top:491px;width:29px;height:12px;border-bottom:none;"></div>
<div style="left:285px;top:491px;width:499px;height:12px;overflow:hidden;">
<div class="t" style="left:22px;top:3px;"><span class="s" style="transform:scaleX(0.8426);">CUS_CR_HOLD_FG</span></div>
<div class="t" style="left:170px;top:3px;"><span class="s" style="transform:scaleX(1.0145);">Hold</span></div>
<div class="t" style="left:285px;top:3px;"><span class="s" style="transform:scaleX(0.9366);">2</span></div>
<div class="t" style="left:336px;top:3px;"><span class="s" style="transform:scaleX(0.9652);">String</span></div>
<div class="t" style="left:402px;top:3px;"><span class="s" style="transform:scaleX(0.9557);">Center</span></div>
<div style="left:453px;top:0;width:1px;height:1px;"><svg style="left:5px;top:2px" width="17" height="17" viewBox="0 0 17 17"><defs><linearGradient id="gg" x1="0" y1="0" x2="0" y2="1"><stop offset="0" stop-color="#838383"/><stop offset="1" stop-color="#bcbcbc"/></linearGradient></defs><circle cx="8.5" cy="8.5" r="8.2" fill="#a6a6a6"/><circle cx="8.5" cy="8.5" r="7.4" fill="#e6e6e6"/><circle cx="8.5" cy="8.5" r="6.3" fill="url(#gg)"/><circle cx="8.5" cy="4.8" r="1.3" fill="#fff"/><rect x="7.4" y="6.8" width="2.2" height="6" fill="#fff"/></svg></div>
</div>
<div class="" style="left:767px;top:318px;width:17px;height:184px;background:#f0f0f0;"></div>
<div class="" style="left:768px;top:335px;width:15px;height:74px;background:#cdcdcd;"></div>
<svg style="left:0;top:0" width="1" height="1"><polygon points="772,328.0 780,328.0 776,324.0" fill="#606060"/></svg>
<svg style="left:0;top:0" width="1" height="1"><polygon points="772,492.0 780,492.0 776,496.0" fill="#606060"/></svg>
<div class="" style="left:289px;top:516px;width:129px;height:14px;background:#f4f5f6;"></div>
<div class="cb" style="left:290px;top:517px;width:16px;height:14px;border-bottom:none;"></div>
<div class="t" style="left:309.0px;top:518px;"><span class="s" style="transform:scaleX(0.9788);">Suppress line if blank</span></div>
<div class="" style="left:696px;top:512px;width:85px;height:18px;background:#f4f5f6;"></div>
<div class="t" style="left:734.0px;top:514px;"><span class="s" style="transform:scaleX(1.0198);">159 total</span></div>
<div class="" style="left:4px;top:531px;width:792px;height:4px;background:#f6f6f6;"></div>
<div class="" style="left:4px;top:535px;width:792px;height:1px;background:#e3e3e3;"></div>
<div class="t" style="left:9.0px;top:544px;"><span class="s" style="transform:scaleX(1.0092);">Orientation:</span></div>
<div class="combo" style="left:81px;top:541px;width:154px;height:20px;"></div>
<div class="t" style="left:85.0px;top:544px;"><span class="s" style="transform:scaleX(0.9328);">Landscape</span></div>
<svg style="left:0;top:0" width="1" height="1"><polygon points="221.9,548 225.5,551.6 229.1,548 229.1,550.6 225.5,554.2 221.9,550.6" fill="#4a4a4a"/></svg>
<div class="t" style="left:246.0px;top:546px;"><span class="s" style="transform:scaleX(0.9635);">Created:</span></div>
<div class="t" style="left:312.5px;top:546px;"><span class="s" style="transform:scaleX(0.9240);">EMK&nbsp; 3/26/2021 6:44:54 PM</span></div>
<div class="cb" style="left:456px;top:545px;width:16px;height:16px;"></div>
<div class="t" style="left:475.5px;top:546px;"><span class="s" style="transform:scaleX(0.9807);">Limit Number of Records?</span></div>
<div class="cb" style="left:614px;top:545px;width:16px;height:16px;"></div>
<div class="t" style="left:633.0px;top:546px;"><span class="s" style="transform:scaleX(0.9620);">Render XLSX lines horizontally</span></div>
<div class="btn" style="left:7px;top:566px;width:77px;height:24px;"></div>
<div class="t" style="left:33.5px;top:571px;"><span class="s" style="transform:scaleX(0.8772);">Save</span></div>
<div class="btn" style="left:85px;top:566px;width:74px;height:24px;"></div>
<div class="t" style="left:97.5px;top:571px;"><span class="s" style="transform:scaleX(0.9156);">Save New</span></div>
<div class="btn" style="left:159px;top:566px;width:76px;height:24px;"></div>
<div class="t" style="left:180.0px;top:571px;"><span class="s" style="transform:scaleX(0.9925);">Delete</span></div>
<div class="btn" style="left:239px;top:566px;width:94px;height:24px;"></div>
<div class="t" style="left:264.8px;top:571px;"><span class="s" style="transform:scaleX(0.9837);">Import...</span></div>
<div class="btn" style="left:333px;top:566px;width:94px;height:24px;"></div>
<div class="t" style="left:359.5px;top:571px;"><span class="s" style="transform:scaleX(0.9340);">Export...</span></div>
<div class="btn" style="left:431px;top:566px;width:83px;height:24px;"></div>
<div class="t" style="left:444.8px;top:571px;"><span class="s" style="transform:scaleX(0.9689);">Template...</span></div>
<div class="btn" style="left:518px;top:566px;width:94px;height:24px;"></div>
<div class="t" style="left:537.0px;top:571px;"><span class="s" style="transform:scaleX(0.8519);">Show SQL...</span></div>
<div class="btn" style="left:612px;top:566px;width:94px;height:24px;"></div>
<div class="t" style="left:645.0px;top:571px;"><span class="s" style="transform:scaleX(0.8798);">Test...</span></div>
<div class="btn" style="left:711px;top:566px;width:78px;height:24px;"></div>
<div class="t" style="left:740.5px;top:571px;"><span class="s" style="transform:scaleX(0.9389);">Exit</span></div>
<div class="" style="left:72px;top:65px;width:1px;height:87px;background:#8f8f8f;opacity:.35;"></div>
<div class="" style="left:73px;top:160px;width:1px;height:87px;background:#8f8f8f;opacity:.35;"></div>
<div class="" style="left:285px;top:318px;width:1px;height:185px;background:#8f8f8f;opacity:.35;"></div>
<div class="red" style="left:572px;top:35px;width:165px;height:28px;"></div>
<div class="red" style="left:60px;top:152px;width:574px;height:102px;"></div>
<div class="red" style="left:2px;top:561px;width:87px;height:35px;"></div>
</body></html>
